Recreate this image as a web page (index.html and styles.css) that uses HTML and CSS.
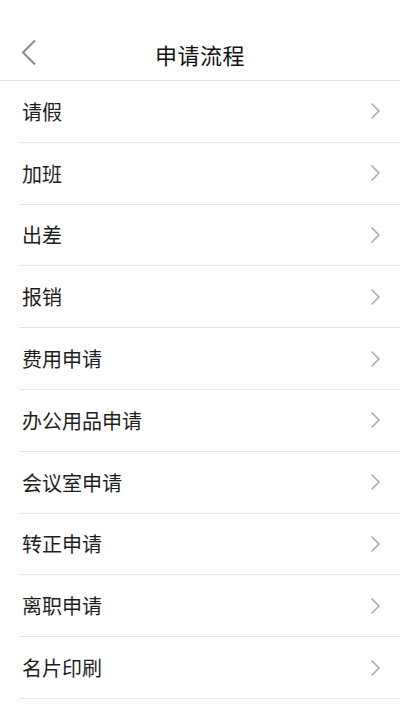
FILE: index.html
```html
<!DOCTYPE html>
<html lang="zh-CN">
<head>
    <meta charset="UTF-8">
    <meta name="viewport" content="width=device-width, initial-scale=1.0">
    <title>申请流程</title>
    <link rel="stylesheet" href="styles.css">
</head>
<body>
    <div class="page">
        <!-- 顶部导航 -->
        <div class="nav-bar">
            <a class="back" href="#">
                <svg width="16" height="27" viewBox="0 0 16 27">
                    <polyline points="14,1.5 2,13.5 14,25.5" fill="none" stroke="#8a8a8a" stroke-width="2"/>
                </svg>
            </a>
            <h3 class="nav-title">申请流程</h3>
        </div>
        <!-- 流程列表 -->
        <ul class="flow-list">
            <li class="flow-item"><span>请假</span><svg class="arrow" viewBox="0 0 11 18"><polyline points="1.5,1.5 9,9 1.5,16.5"/></svg></li>
            <li class="flow-item"><span>加班</span><svg class="arrow" viewBox="0 0 11 18"><polyline points="1.5,1.5 9,9 1.5,16.5"/></svg></li>
            <li class="flow-item"><span>出差</span><svg class="arrow" viewBox="0 0 11 18"><polyline points="1.5,1.5 9,9 1.5,16.5"/></svg></li>
            <li class="flow-item"><span>报销</span><svg class="arrow" viewBox="0 0 11 18"><polyline points="1.5,1.5 9,9 1.5,16.5"/></svg></li>
            <li class="flow-item"><span>费用申请</span><svg class="arrow" viewBox="0 0 11 18"><polyline points="1.5,1.5 9,9 1.5,16.5"/></svg></li>
            <li class="flow-item"><span>办公用品申请</span><svg class="arrow" viewBox="0 0 11 18"><polyline points="1.5,1.5 9,9 1.5,16.5"/></svg></li>
            <li class="flow-item"><span>会议室申请</span><svg class="arrow" viewBox="0 0 11 18"><polyline points="1.5,1.5 9,9 1.5,16.5"/></svg></li>
            <li class="flow-item"><span>转正申请</span><svg class="arrow" viewBox="0 0 11 18"><polyline points="1.5,1.5 9,9 1.5,16.5"/></svg></li>
            <li class="flow-item"><span>离职申请</span><svg class="arrow" viewBox="0 0 11 18"><polyline points="1.5,1.5 9,9 1.5,16.5"/></svg></li>
            <li class="flow-item"><span>名片印刷</span><svg class="arrow" viewBox="0 0 11 18"><polyline points="1.5,1.5 9,9 1.5,16.5"/></svg></li>
        </ul>
    </div>
</body>
</html>
```
FILE: styles.css
```css
body {
    margin: 0;
    background: #fff;
    font-family: "Noto Sans CJK SC", "Noto Sans", sans-serif;
    color: #1e1e1e;
}
.page {
    width: 400px;
}
.nav-bar {
    position: relative;
    height: 52px;
    padding-top: 28px;
    display: flex;
    align-items: center;
    justify-content: center;
    border-bottom: 1px solid #dedede;
}
.back {
    position: absolute;
    left: 21px;
    top: 39px;
    display: block;
    line-height: 0;
}
.nav-title {
    margin: 0;
    font-size: 22px;
    font-weight: normal;
    color: #111;
    letter-spacing: 0.5px;
}
.flow-list {
    list-style: none;
    margin: 0;
    padding: 0 0 0 19px;
}
.flow-item {
    height: 60.8px;
    display: flex;
    align-items: center;
    justify-content: space-between;
    border-bottom: 1px solid #e6e6e6;
    padding-left: 3px;
    font-size: 20px;
}
.arrow {
    width: 11px;
    height: 18px;
    margin-right: 19px;
    fill: none;
    stroke: #ababab;
    stroke-width: 1.6;
}
```
